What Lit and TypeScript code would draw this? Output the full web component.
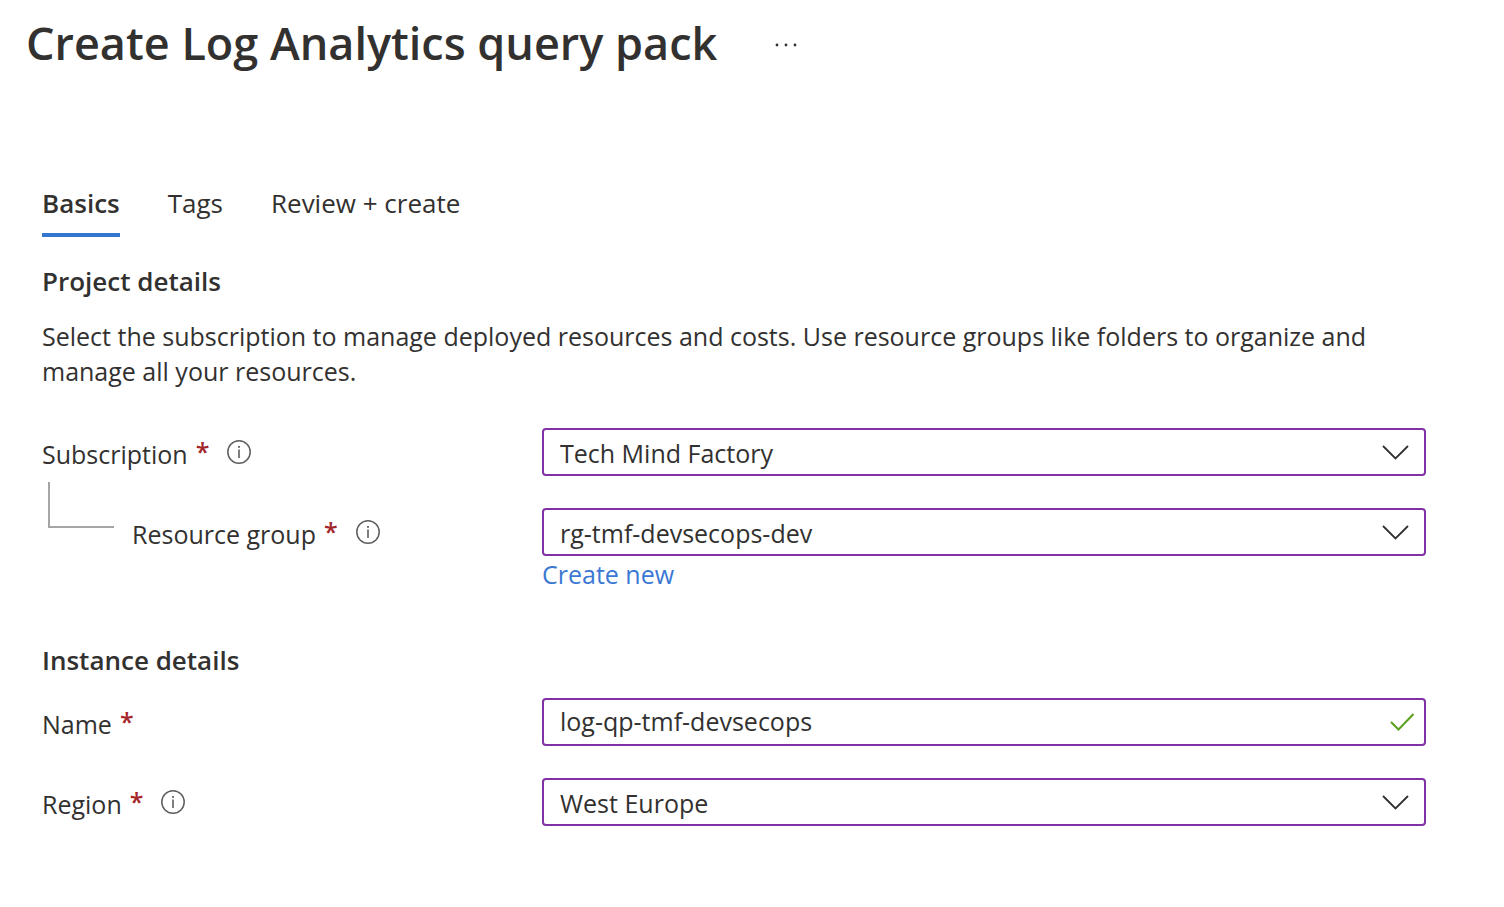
import { LitElement, html, css, svg, nothing } from "lit";
import { customElement, property, state } from "lit/decorators.js";
import { classMap } from "lit/directives/class-map.js";

const chevron = svg`<path d="M1 1 L13.5 13.5 L26 1" fill="none" stroke="#323130" stroke-width="1.8"/>`;
const tick = svg`<path d="M1 9 L8.5 16.5 L23.5 1" fill="none" stroke="#5aa01e" stroke-width="2"/>`;

@customElement("info-button")
export class InfoButton extends LitElement {
  static styles = css`
    :host { display: block; height: 24px; }
    .info { display: block; padding: 0; border: 0; background: none; cursor: pointer; }
    .glyph { display: block; }
  `;

  @property() topic = "";

  render() {
    return html`<button class="info" type="button" aria-label="About ${this.topic}">
      <svg class="glyph" width="24" height="24" viewBox="0 0 24 24">
        <circle cx="12" cy="12" r="11.2" fill="none" stroke="#605e5c" stroke-width="1.5" />
        <rect x="11.2" y="9.5" width="1.6" height="8.5" fill="#605e5c" />
        <rect x="11.1" y="6" width="1.8" height="1.8" fill="#605e5c" />
      </svg>
    </button>`;
  }
}

@customElement("app-root")
export class AppRoot extends LitElement {
  static styles = css`
    :host {
      display: block;
      font-family: "Open Sans", "Noto Sans", sans-serif;
      font-size: 25px;
      line-height: 36px;
      color: #323130;
      background: #fff;
    }
    * { box-sizing: border-box; }
    h1, h2, p { margin: 0; }
    button, select, input { font: inherit; color: inherit; }

    .header { display: flex; align-items: center; gap: 56px; height: 90px; padding-left: 26px; }
    .title { padding-bottom: 4px; font-size: 45px; line-height: 64px; font-weight: 600; }
    .more { display: flex; padding: 8px 0; border: 0; background: none; cursor: pointer; }

    .body { padding: 94px 78px 80px 42px; }

    .tabs { display: flex; gap: 48px; height: 53px; }
    .tab {
      display: flex;
      align-items: flex-start;
      padding: 0;
      border: 0;
      border-bottom: 4px solid transparent;
      background: none;
      font-size: 26px;
      line-height: 38px;
      cursor: pointer;
    }
    .tab.active { font-weight: 600; border-bottom-color: #3475d0; }

    .section { font-size: 26px; font-weight: 600; }
    .project { margin-top: 26px; }
    .intro { margin-top: 20px; line-height: 35px; }
    .instance { margin-top: 50px; }

    .fields { display: grid; row-gap: 32px; }
    .fields.first { margin-top: 39px; }
    .fields.second { margin-top: 20px; }

    .field { display: grid; grid-template-columns: 500px minmax(0, 1fr); align-items: start; }
    .caption { display: flex; align-items: center; height: 48px; padding-top: 4px; }
    .required { padding-bottom: 6px; color: #a4262c; font-weight: 600; margin-left: 8px; }
    .hint { margin-left: 18px; margin-bottom: 4px; }
    .branch {
      align-self: flex-start;
      width: 66px;
      height: 46px;
      margin: -30px 18px 0 6px;
      border: solid #a6a6a6;
      border-width: 0 0 2px 2px;
    }

    .control { position: relative; }
    .box {
      display: block;
      width: 100%;
      height: 48px;
      margin: 0;
      padding: 2px 60px 0 16px;
      border: 2px solid #8031a3;
      border-radius: 4px;
      background: #fff;
      appearance: none;
      outline: 0;
    }
    input.box { padding-top: 0; padding-bottom: 2px; }
    .mark { position: absolute; top: 17px; right: 17px; pointer-events: none; }
    .mark.valid { right: 11px; top: 15px; }
    .link { display: block; width: fit-content; color: #3b78d4; text-decoration: none; }
  `;

  @state() private tab = "Basics";

  private caption(id: string, text: string, hint: boolean, nested = false) {
    return html`<div class="caption">
      ${nested ? html`<span class="branch"></span>` : nothing}
      <label for=${id}>${text}</label><span class="required" aria-hidden="true">*</span>
      ${hint ? html`<info-button class="hint" topic=${text}></info-button>` : nothing}
    </div>`;
  }

  private dropdown(id: string, value: string) {
    return html`<div class="control">
      <select class="box" id=${id} required><option>${value}</option></select>
      <svg class="mark" width="27" height="16" viewBox="0 0 27 16">${chevron}</svg>
    </div>`;
  }

  render() {
    return html`
      <header class="header">
        <h1 class="title">Create Log Analytics query pack</h1>
        <button class="more" type="button" aria-label="More actions">
          <svg width="26" height="4" viewBox="0 0 26 4" fill="#323130">
            <circle cx="4" cy="2" r="1.4" /><circle cx="13" cy="2" r="1.4" /><circle cx="22" cy="2" r="1.4" />
          </svg>
        </button>
      </header>
      <main class="body">
        <nav class="tabs" role="tablist">
          ${["Basics", "Tags", "Review + create"].map(
            (name) => html`<button
              class=${classMap({ tab: true, active: this.tab === name })}
              type="button"
              role="tab"
              aria-selected=${this.tab === name}
              @click=${() => (this.tab = name)}
            >${name}</button>`
          )}
        </nav>
        <h2 class="section project">Project details</h2>
        <p class="intro">
          Select the subscription to manage deployed resources and costs. Use resource groups like folders to
          organize and manage all your resources.
        </p>
        <div class="fields first">
          <div class="field">
            ${this.caption("subscription", "Subscription", true)}
            ${this.dropdown("subscription", "Tech Mind Factory")}
          </div>
          <div class="field">
            ${this.caption("group", "Resource group", true, true)}
            <div>
              ${this.dropdown("group", "rg-tmf-devsecops-dev")}
              <a class="link" href="#new">Create new</a>
            </div>
          </div>
        </div>
        <h2 class="section instance">Instance details</h2>
        <div class="fields second">
          <div class="field">
            ${this.caption("name", "Name", false)}
            <div class="control">
              <input class="box" id="name" type="text" value="log-qp-tmf-devsecops" required />
              <svg class="mark valid" width="25" height="18" viewBox="0 0 25 18">${tick}</svg>
            </div>
          </div>
          <div class="field">
            ${this.caption("region", "Region", true)}
            ${this.dropdown("region", "West Europe")}
          </div>
        </div>
      </main>
    `;
  }
}
